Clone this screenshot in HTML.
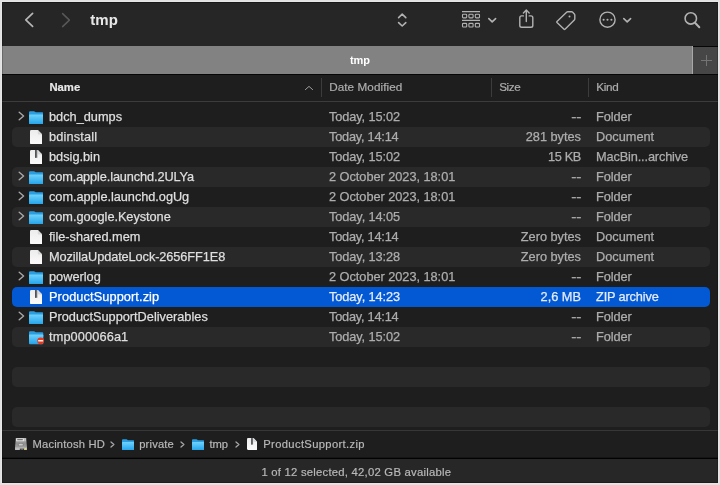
<!DOCTYPE html>
<html><head><meta charset="utf-8"><title>tmp</title>
<style>
*{box-sizing:border-box;margin:0;padding:0}
html,body{width:720px;height:485px;overflow:hidden;background:#e1e1e1;font-family:"Liberation Sans",sans-serif;}
#win{position:absolute;left:2px;top:2px;width:716px;height:481px;background:#1e1e1e;overflow:hidden;color:#dfdfdf;font-size:12.75px;will-change:transform;opacity:0.9999}
#tb{position:absolute;left:0;top:0;width:716px;height:44px;background:#262626}
#tabs{position:absolute;left:0;top:44px;width:716px;height:29px;background:#060606}
#tabs .g{position:absolute;left:0;top:0;width:691px;height:27.5px;background:#828282;border-right:1px solid #a8a8a8}
#tabs .t{position:absolute;left:0;top:0;width:690px;text-align:center;line-height:28px;font-size:11px;font-weight:bold;color:#fff;padding-left:26px}
#tabs .plus{position:absolute;left:691px;top:1px;width:25px;height:26.5px;background:#464646}
#tabs .plus:before,#tabs .plus:after{content:"";position:absolute;background:#747474}
#tabs .plus:before{left:7.8px;top:13.4px;width:11px;height:1px}
#tabs .plus:after{left:12.8px;top:8.4px;width:1px;height:11px}
#hdr{position:absolute;left:0;top:73px;width:716px;height:27px;background:#1e1e1e;border-bottom:1px solid #3c3c3c;font-size:11.7px;color:#adadad}
#hdr span{position:absolute;top:0;line-height:24px;-webkit-text-stroke:0.2px}
#hdr i{position:absolute;top:3.3px;width:1px;height:18.3px;background:#3c3c3c}
.row{position:absolute;left:10px;width:698px;height:20px;border-radius:5px;line-height:20px;white-space:nowrap}
.row.alt{background:#292929}
.row.sel{background:#0358d4;color:#fff}
.row span{position:absolute;top:0;-webkit-text-stroke:0.25px}
.row .n{left:37px}.row .d{left:317px;color:#adadad}.row .s{right:129px;color:#adadad}.row .k{left:584px;color:#adadad}
.row.sel span{color:#e4ecfa}.row.sel .n{color:#fff}
.ch{position:absolute;left:6.2px;top:4.2px;width:7px;height:10px}
.ic{position:absolute}
.fo{left:16.9px;top:3.7px;width:14.3px;height:13.3px}
.do{left:17.8px;top:2.8px;width:12.4px;height:14.2px}
#path{position:absolute;left:0;top:428px;width:716px;height:28px;border-top:1px solid #373737;background:#1e1e1e;font-size:11.2px;color:#b8b8b8}
#status{position:absolute;left:0;top:455px;width:716px;height:26px;border-top:1px solid #151515;box-shadow:inset 0 1px 0 #020202;background:#272727;font-size:11.3px;color:#b8b8b8;line-height:29px;letter-spacing:0.23px;-webkit-text-stroke:0.2px}
#title{position:absolute;left:88.3px;top:8.6px;font-size:15px;font-weight:bold;color:#e8e8e8;line-height:18px}
#path span{position:absolute;top:0;line-height:26px;white-space:nowrap;-webkit-text-stroke:0.2px}
.pc{position:absolute;top:10px;width:5px;height:7px}
.pf{position:absolute;top:7.7px;width:12.2px;height:11.4px}
</style></head><body>
<div style="position:absolute;left:1px;top:1px;width:718px;height:483px;background:#e6e6e6"></div>
<svg width="0" height="0" style="position:absolute"><defs>
<linearGradient id="fg" x1="0" y1="0" x2="0" y2="1"><stop offset="0" stop-color="#6fd2fc"/><stop offset="0.5" stop-color="#48bbf4"/><stop offset="1" stop-color="#25a3ea"/></linearGradient>
<linearGradient id="dg" x1="0" y1="0" x2="0" y2="1"><stop offset="0" stop-color="#ededed"/><stop offset="1" stop-color="#fbfbfb"/></linearGradient>
<g id="fold"><path d="M0 1.3Q0 0.2 1.1 0.2H4.9Q5.6 0.2 6.1 0.7L6.7 1.3H13.2Q14.3 1.3 14.3 2.4V6H0Z" fill="#2a9ee2"/><path d="M0 4.2Q0 3.6 0.6 3.6H13.7Q14.3 3.6 14.3 4.2V12.2Q14.3 13.3 13.2 13.3H1.1Q0 13.3 0 12.2Z" fill="url(#fg)"/></g>
<g id="docd"><path d="M1.3 0H7.8L12.4 4.6V12.9Q12.4 14.2 11.1 14.2H1.3Q0 14.2 0 12.9V1.3Q0 0 1.3 0Z" fill="url(#dg)"/><path d="M7.8 0L12.4 4.6H9Q7.8 4.6 7.8 3.4Z" fill="#dadada"/></g>
<g id="zipd"><use href="#docd"/><rect x="5.2" y="0" width="2.1" height="7.8" fill="#6a6e72"/><rect x="5.2" y="0" width="0.8" height="7.8" fill="#44474a"/></g>
<g id="foldx"><use href="#fold"/><circle cx="11.65" cy="9.8" r="3.4" fill="#ea3a1e"/><rect x="9.2" y="9.1" width="4.9" height="1.35" fill="#fff"/></g>
</defs></svg>
<div id="win">
<div id="tb">
<svg style="position:absolute;left:0;top:0" width="716" height="44" viewBox="2 2 716 44" fill="none" stroke-linecap="round" stroke-linejoin="round">
<path d="M32.6 13.4L25.8 19.9L32.6 26.4" stroke="#b6b6b6" stroke-width="1.7"/>
<path d="M62.6 13.6L69.4 20.1L62.6 26.6" stroke="#585858" stroke-width="1.5"/>
<g stroke="#b2b2b2" stroke-width="1.6">
<path d="M398.6 17.6L402.2 14.2L405.8 17.6"/><path d="M398.6 22.6L402.2 26L405.8 22.6"/>
<path d="M488.8 18.6L492.2 21.8L495.6 18.6"/>
<path d="M623.8 18.6L627.2 21.8L630.6 18.6"/>
</g>
<g stroke="#b2b2b2" stroke-width="1.1">
<path d="M462 11.6H480M462 20.4H480" stroke-linecap="butt"/>
<rect x="462.5" y="14.3" width="4.2" height="3.6" rx="0.8"/><rect x="468.9" y="14.3" width="4.2" height="3.6" rx="0.8"/><rect x="475.3" y="14.3" width="4.2" height="3.6" rx="0.8"/>
<rect x="462.5" y="23.4" width="4.2" height="3.6" rx="0.8"/><rect x="468.9" y="23.4" width="4.2" height="3.6" rx="0.8"/><rect x="475.3" y="23.4" width="4.2" height="3.6" rx="0.8"/>
</g>
<g stroke="#b2b2b2" stroke-width="1.4">
<path d="M523.4 15.9H521.6Q519.8 15.9 519.8 17.7V25.4Q519.8 27.2 521.6 27.2H531Q532.8 27.2 532.8 25.4V17.7Q532.8 15.9 531 15.9H529.2"/>
<path d="M526.3 21.6V10.4M523.4 13L526.3 10.1L529.2 13"/>
<path d="M557 21.4L566.6 12.2Q567.1 11.8 567.8 11.8H571.6Q572.2 11.8 572.7 12.3L574.3 13.9Q574.8 14.4 574.8 15V18.8Q574.8 19.5 574.3 20L565 29.2Q564.4 29.7 563.8 29.1L557 22.6Q556.4 22 557 21.4Z"/>
<circle cx="607.5" cy="19.7" r="7.6"/>
<circle cx="690.8" cy="18.4" r="5.7" stroke-width="1.6"/><path d="M695 22.8L699.3 27.2" stroke-width="2"/>
</g>
<g fill="#b2b2b2"><circle cx="569.5" cy="16.6" r="1"/><circle cx="603.6" cy="19.7" r="1.05"/><circle cx="607.5" cy="19.7" r="1.05"/><circle cx="611.4" cy="19.7" r="1.05"/></g>
</svg>
<span id="title">tmp</span>
</div>
<div id="tabs"><div class="g"></div><div class="t">tmp</div><div class="plus"></div></div>
<div id="hdr"><span style="left:47.4px;font-weight:bold;color:#e8e8e8;font-size:11.3px">Name</span><svg style="position:absolute;left:302px;top:10px" width="10" height="6" viewBox="0 0 10 6"><path d="M1.4 4.6L5 1.4L8.6 4.6" fill="none" stroke="#9e9e9e" stroke-width="1" stroke-linecap="round" stroke-linejoin="round"/></svg><i style="left:319px"></i><span style="left:327.2px;letter-spacing:0.08px">Date Modified</span><i style="left:489px"></i><span style="left:497.2px;letter-spacing:-0.4px">Size</span><i style="left:586px"></i><span style="left:594.3px;letter-spacing:-0.3px">Kind</span></div>
<div class="row" style="top:105px"><svg class="ch" viewBox="0 0 7 10"><path d="M1.2 1.2L5.6 5L1.2 8.8" fill="none" stroke="#a8a8a8" stroke-width="1.4" stroke-linecap="round" stroke-linejoin="round"/></svg><svg class="ic fo" viewBox="0 0 14.3 13.3"><use href="#fold"/></svg><span class="n">bdch_dumps</span><span class="d" style="letter-spacing:-0.1px">Today, 15:02</span><span class="s" style="transform:scaleX(1.22);transform-origin:100% 50%">--</span><span class="k" style="letter-spacing:-0.1px">Folder</span></div>
<div class="row alt" style="top:125px"><svg class="ic do" viewBox="0 0 12.4 14.2"><use href="#docd"/></svg><span class="n" style="letter-spacing:0.15px">bdinstall</span><span class="d" style="letter-spacing:-0.22px">Today, 14:14</span><span class="s">281 bytes</span><span class="k">Document</span></div>
<div class="row" style="top:145px"><svg class="ic do" viewBox="0 0 12.4 14.2"><use href="#zipd"/></svg><span class="n">bdsig.bin</span><span class="d" style="letter-spacing:-0.1px">Today, 15:02</span><span class="s" style="letter-spacing:-0.35px">15 KB</span><span class="k" style="letter-spacing:-0.14px">MacBin...archive</span></div>
<div class="row alt" style="top:165px"><svg class="ch" viewBox="0 0 7 10"><path d="M1.2 1.2L5.6 5L1.2 8.8" fill="none" stroke="#a8a8a8" stroke-width="1.4" stroke-linecap="round" stroke-linejoin="round"/></svg><svg class="ic fo" viewBox="0 0 14.3 13.3"><use href="#fold"/></svg><span class="n" style="letter-spacing:-0.12px">com.apple.launchd.2ULYa</span><span class="d" style="letter-spacing:-0.03px">2 October 2023, 18:01</span><span class="s" style="transform:scaleX(1.22);transform-origin:100% 50%">--</span><span class="k" style="letter-spacing:-0.1px">Folder</span></div>
<div class="row" style="top:185px"><svg class="ch" viewBox="0 0 7 10"><path d="M1.2 1.2L5.6 5L1.2 8.8" fill="none" stroke="#a8a8a8" stroke-width="1.4" stroke-linecap="round" stroke-linejoin="round"/></svg><svg class="ic fo" viewBox="0 0 14.3 13.3"><use href="#fold"/></svg><span class="n" style="letter-spacing:-0.04px">com.apple.launchd.ogUg</span><span class="d" style="letter-spacing:-0.03px">2 October 2023, 18:01</span><span class="s" style="transform:scaleX(1.22);transform-origin:100% 50%">--</span><span class="k" style="letter-spacing:-0.1px">Folder</span></div>
<div class="row alt" style="top:205px"><svg class="ch" viewBox="0 0 7 10"><path d="M1.2 1.2L5.6 5L1.2 8.8" fill="none" stroke="#a8a8a8" stroke-width="1.4" stroke-linecap="round" stroke-linejoin="round"/></svg><svg class="ic fo" viewBox="0 0 14.3 13.3"><use href="#fold"/></svg><span class="n" style="letter-spacing:-0.05px">com.google.Keystone</span><span class="d" style="letter-spacing:-0.08px">Today, 14:05</span><span class="s" style="transform:scaleX(1.22);transform-origin:100% 50%">--</span><span class="k" style="letter-spacing:-0.1px">Folder</span></div>
<div class="row" style="top:225px"><svg class="ic do" viewBox="0 0 12.4 14.2"><use href="#docd"/></svg><span class="n">file-shared.mem</span><span class="d" style="letter-spacing:-0.22px">Today, 14:14</span><span class="s">Zero bytes</span><span class="k">Document</span></div>
<div class="row alt" style="top:245px"><svg class="ic do" viewBox="0 0 12.4 14.2"><use href="#docd"/></svg><span class="n" style="letter-spacing:-0.09px">MozillaUpdateLock-2656FF1E8</span><span class="d" style="letter-spacing:-0.08px">Today, 13:28</span><span class="s">Zero bytes</span><span class="k">Document</span></div>
<div class="row" style="top:265px"><svg class="ch" viewBox="0 0 7 10"><path d="M1.2 1.2L5.6 5L1.2 8.8" fill="none" stroke="#a8a8a8" stroke-width="1.4" stroke-linecap="round" stroke-linejoin="round"/></svg><svg class="ic fo" viewBox="0 0 14.3 13.3"><use href="#fold"/></svg><span class="n">powerlog</span><span class="d" style="letter-spacing:-0.03px">2 October 2023, 18:01</span><span class="s" style="transform:scaleX(1.22);transform-origin:100% 50%">--</span><span class="k" style="letter-spacing:-0.1px">Folder</span></div>
<div class="row sel" style="top:285px"><svg class="ic do" viewBox="0 0 12.4 14.2"><use href="#zipd"/></svg><span class="n" style="letter-spacing:0.1px">ProductSupport.zip</span><span class="d" style="letter-spacing:-0.08px">Today, 14:23</span><span class="s">2,6 MB</span><span class="k" style="letter-spacing:-0.15px">ZIP archive</span></div>
<div class="row" style="top:305px"><svg class="ch" viewBox="0 0 7 10"><path d="M1.2 1.2L5.6 5L1.2 8.8" fill="none" stroke="#a8a8a8" stroke-width="1.4" stroke-linecap="round" stroke-linejoin="round"/></svg><svg class="ic fo" viewBox="0 0 14.3 13.3"><use href="#fold"/></svg><span class="n">ProductSupportDeliverables</span><span class="d" style="letter-spacing:-0.22px">Today, 14:14</span><span class="s" style="transform:scaleX(1.22);transform-origin:100% 50%">--</span><span class="k" style="letter-spacing:-0.1px">Folder</span></div>
<div class="row alt" style="top:325px"><svg class="ic fo" viewBox="0 0 14.3 13.3" style="overflow:visible"><use href="#foldx"/></svg><span class="n" style="letter-spacing:0.12px">tmp000066a1</span><span class="d" style="letter-spacing:-0.1px">Today, 15:02</span><span class="s" style="transform:scaleX(1.22);transform-origin:100% 50%">--</span><span class="k" style="letter-spacing:-0.1px">Folder</span></div>
<div class="row alt" style="top:365px"></div>
<div class="row alt" style="top:405px"></div>
<div id="path">
<svg style="position:absolute;left:12.9px;top:6.7px" width="12" height="12.2" viewBox="0 0 12 12.2"><defs><linearGradient id="hdg" x1="0" y1="0" x2="0" y2="1"><stop offset="0" stop-color="#b4b4b4"/><stop offset="0.45" stop-color="#909090"/><stop offset="1" stop-color="#a8a8a8"/></linearGradient></defs><path d="M1.3 0.1H10.7Q11.1 0.1 11.2 0.5L12 9.6V11.4Q12 12 11.4 12H0.6Q0 12 0 11.4V9.6L0.8 0.5Q0.9 0.1 1.3 0.1Z" fill="url(#hdg)"/><rect x="1.1" y="0.4" width="7.9" height="2.8" rx="0.3" fill="#e4e4e4"/><rect x="2.2" y="1.3" width="5.6" height="0.9" fill="#4a4a4a"/><rect x="9.3" y="0.4" width="1.6" height="2.8" fill="#c4c4c4"/><ellipse cx="5.8" cy="6.6" rx="3.2" ry="1.7" fill="#868686"/><ellipse cx="5.8" cy="6.7" rx="2.2" ry="0.9" fill="#cacaca"/><path d="M0.2 9.6H11.8V11.4Q11.8 11.9 11.3 11.9H0.7Q0.2 11.9 0.2 11.4Z" fill="#bdbdbd"/><rect x="4.8" y="10.6" width="4.2" height="1.4" fill="#3a3a3a"/><rect x="5.9" y="10.6" width="0.5" height="1.4" fill="#9a9a9a"/><rect x="7.3" y="10.6" width="0.5" height="1.4" fill="#9a9a9a"/><circle cx="10.6" cy="10.8" r="0.8" fill="#f4e233"/></svg>
<span style="left:30.5px;letter-spacing:0.18px">Macintosh HD</span>
<svg class="pc" style="left:108.2px" viewBox="0 0 5 7"><path d="M1 1L3.9 3.5L1 6" fill="none" stroke="#a6a6a6" stroke-width="1.3" stroke-linecap="round" stroke-linejoin="round"/></svg>
<svg class="pf" style="left:120px" viewBox="0 0 14.3 13.3"><use href="#fold"/></svg>
<span style="left:137.2px;letter-spacing:0.17px">private</span>
<svg class="pc" style="left:178.2px" viewBox="0 0 5 7"><path d="M1 1L3.9 3.5L1 6" fill="none" stroke="#a6a6a6" stroke-width="1.3" stroke-linecap="round" stroke-linejoin="round"/></svg>
<svg class="pf" style="left:190px" viewBox="0 0 14.3 13.3"><use href="#fold"/></svg>
<span style="left:207.4px">tmp</span>
<svg class="pc" style="left:233.2px" viewBox="0 0 5 7"><path d="M1 1L3.9 3.5L1 6" fill="none" stroke="#a6a6a6" stroke-width="1.3" stroke-linecap="round" stroke-linejoin="round"/></svg>
<svg style="position:absolute;left:244.7px;top:7px" width="10.3" height="12" viewBox="0 0 12.4 14.2"><use href="#zipd"/></svg>
<span style="left:261.3px;letter-spacing:0.36px">ProductSupport.zip</span>
</div>
<div id="status"><span style="position:absolute;left:259.4px;top:0;white-space:nowrap">1 of 12 selected, 42,02 GB available</span></div>
<div style="position:absolute;left:0;top:0;width:716px;height:481px;border:1px solid;border-color:rgba(0,0,0,.35) rgba(0,0,0,.2) rgba(0,0,0,.25) rgba(0,0,0,.2);pointer-events:none"></div>
</div>
</body></html>
